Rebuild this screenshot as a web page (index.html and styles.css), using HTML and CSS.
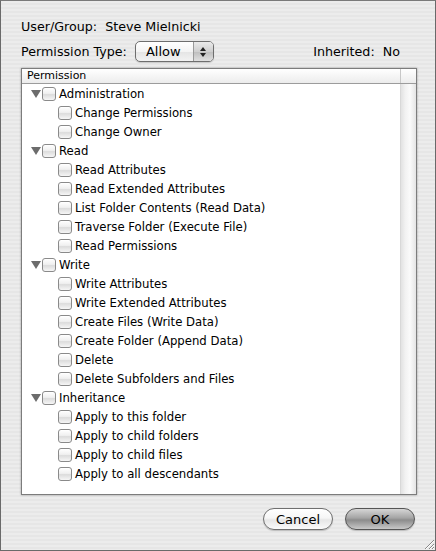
FILE: index.html
```html
<!DOCTYPE html>
<html>
<head>
<meta charset="utf-8">
<link rel="stylesheet" href="styles.css">
</head>
<body>
<div class="sheet">
  <div class="line user">User/Group:&nbsp; Steve Mielnicki</div>
  <div class="line typerow">
    <span>Permission Type:</span>
    <div class="popup">
      <span class="popup-label">Allow</span>
      <span class="popup-arrows">
        <svg width="8" height="12" viewBox="0 0 8 12"><path d="M4 1 L7 5 L1 5 Z M4 11 L7 7 L1 7 Z" fill="#222"/></svg>
      </span>
    </div>
    <span class="inherited">Inherited:&nbsp; No</span>
  </div>
  <div class="listbox">
    <div class="header"><span>Permission</span><span class="hcorner"></span></div>
    <div class="listbody">
      <div class="rows">
        <div class="row group"><span class="tri"></span><span class="cb"></span><span>Administration</span></div>
        <div class="row child"><span class="cb"></span><span>Change Permissions</span></div>
        <div class="row child"><span class="cb"></span><span>Change Owner</span></div>
        <div class="row group"><span class="tri"></span><span class="cb"></span><span>Read</span></div>
        <div class="row child"><span class="cb"></span><span>Read Attributes</span></div>
        <div class="row child"><span class="cb"></span><span>Read Extended Attributes</span></div>
        <div class="row child"><span class="cb"></span><span>List Folder Contents (Read Data)</span></div>
        <div class="row child"><span class="cb"></span><span>Traverse Folder (Execute File)</span></div>
        <div class="row child"><span class="cb"></span><span>Read Permissions</span></div>
        <div class="row group"><span class="tri"></span><span class="cb"></span><span>Write</span></div>
        <div class="row child"><span class="cb"></span><span>Write Attributes</span></div>
        <div class="row child"><span class="cb"></span><span>Write Extended Attributes</span></div>
        <div class="row child"><span class="cb"></span><span>Create Files (Write Data)</span></div>
        <div class="row child"><span class="cb"></span><span>Create Folder (Append Data)</span></div>
        <div class="row child"><span class="cb"></span><span>Delete</span></div>
        <div class="row child"><span class="cb"></span><span>Delete Subfolders and Files</span></div>
        <div class="row group"><span class="tri"></span><span class="cb"></span><span>Inheritance</span></div>
        <div class="row child"><span class="cb"></span><span>Apply to this folder</span></div>
        <div class="row child"><span class="cb"></span><span>Apply to child folders</span></div>
        <div class="row child"><span class="cb"></span><span>Apply to child files</span></div>
        <div class="row child"><span class="cb"></span><span>Apply to all descendants</span></div>
      </div>
      <div class="scrolltrack"></div>
    </div>
  </div>
  <div class="buttons">
    <div class="btn cancel">Cancel</div>
    <div class="btn ok">OK</div>
  </div>
  <svg class="grip" width="12" height="12" viewBox="0 0 12 12">
    <path d="M11 2 L2 11 M11 6 L6 11 M11 9 L9 11" stroke="#888" stroke-width="1"/>
    <path d="M11 3 L3 11 M11 7 L7 11 M11 10 L10 11" stroke="#fff" stroke-width="1"/>
  </svg>
</div>
</body>
</html>
```
FILE: styles.css
```css
* { box-sizing: border-box; }
html, body { margin: 0; padding: 0; }
body {
  width: 436px;
  height: 551px;
  font-family: "DejaVu Sans", "Liberation Sans", sans-serif;
  font-size: 12.7px;
  color: #000;
  overflow: hidden;
}
.sheet {
  position: relative;
  width: 436px;
  height: 551px;
  border: 1px solid #6a6a6a;
  border-top-color: #7a7a7a;
  background: repeating-linear-gradient(to bottom, #ececec 0px, #ececec 2px, #e6e6e6 2px, #e6e6e6 4px);
  padding: 16px 20px 0 20px;
  display: flex;
  flex-direction: column;
}
.line { height: 16px; line-height: 16px; }
.user { margin-top: 2px; }
.typerow {
  margin-top: 6px;
  height: 21px;
  display: flex;
  align-items: center;
}
.popup {
  margin-left: 8px;
  width: 79px;
  height: 21px;
  border: 1px solid #6e6e6e;
  border-radius: 5px;
  background: linear-gradient(to bottom, #ffffff 0%, #f4f4f4 50%, #e4e4e4 51%, #f2f2f2 100%);
  display: flex;
  align-items: center;
  box-shadow: 0 1px 1px rgba(0,0,0,0.15);
  overflow: hidden;
}
.popup-label { flex: 1; padding-left: 10px; font-size: 13px; }
.popup-arrows {
  width: 20px;
  height: 100%;
  display: flex;
  align-items: center;
  justify-content: center;
  background: linear-gradient(to bottom, #eaeaea 0%, #cfcfcf 50%, #bdbdbd 51%, #e0e0e0 100%);
  border-left: 1px solid #9a9a9a;
}
.inherited { margin-left: auto; margin-right: 15px; }
.listbox {
  margin-top: 6px;
  width: 396px;
  height: 427px;
  border: 1px solid #7c7c7c;
  background: #fff;
  box-shadow: 0 0 2px rgba(0,0,0,0.35);
  display: flex;
  flex-direction: column;
}
.header {
  height: 15px;
  display: flex;
  font-size: 11px;
  line-height: 14px;
  background: linear-gradient(to bottom, #ffffff, #ececec);
  border-bottom: 1px solid #9c9c9c;
}
.header span:first-child { padding-left: 5px; flex: 1; }
.hcorner { width: 16px; border-left: 1px solid #c8c8c8; }
.listbody { flex: 1; display: flex; }
.rows { flex: 1; padding-top: 0; }
.row {
  height: 19px;
  display: flex;
  align-items: center;
  font-size: 11.7px;
  white-space: nowrap;
}
.row.group { padding-left: 9px; }
.row.child { padding-left: 36px; }
.tri {
  width: 0; height: 0;
  border-left: 5px solid transparent;
  border-right: 5px solid transparent;
  border-top: 8px solid #6c6c6c;
  margin-right: 1px;
  margin-top: 1px;
}
.cb {
  width: 14px;
  height: 14px;
  border: 1px solid #8a8a8a;
  border-radius: 3px;
  background: linear-gradient(to bottom, #ffffff 0%, #f0f0f0 45%, #dcdcdc 55%, #f6f6f6 100%);
  box-shadow: inset 0 1px 0 #fff;
  margin-right: 3px;
  flex: none;
}
.scrolltrack {
  width: 16px;
  background: linear-gradient(to right, #e2e2e2 0%, #f2f2f2 30%, #fafafa 60%, #e4e4e4 100%);
  border-left: 1px solid #d8d8d8;
}
.buttons {
  margin-top: 13px;
  padding-right: 0;
  display: flex;
  justify-content: flex-end;
  gap: 12px;
}
.btn {
  width: 70px;
  height: 22px;
  border-radius: 11px;
  border: 1px solid #6f6f6f;
  display: flex;
  align-items: center;
  justify-content: center;
  font-size: 13px;
  box-shadow: 0 1px 1px rgba(0,0,0,0.2);
}
.cancel {
  background: linear-gradient(to bottom, #ffffff 0%, #f6f6f6 45%, #e6e6e6 55%, #fafafa 100%);
}
.ok {
  background: linear-gradient(to bottom, #d6d6d6 0%, #a4a4a4 45%, #8c8c8c 55%, #c8c8c8 100%);
  border-color: #555;
}
.grip { position: absolute; right: 0; bottom: 0; }
```
